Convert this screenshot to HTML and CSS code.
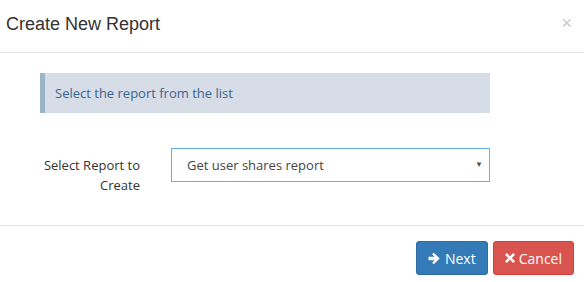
FILE: index.html
```html
<!DOCTYPE html>
<html lang="en">
<head>
    <meta charset="UTF-8">
    <title>Create New Report</title>
    <link rel="stylesheet" href="styles.css">
</head>
<body>
<div class="modal">
    <div class="modal-header">
        <h4 class="modal-title">Create New Report</h4>
        <span class="close">&times;</span>
    </div>
    <div class="modal-body">
        <div class="alert">Select the report from the list</div>
        <div class="form-row">
            <label class="form-label">Select Report to Create</label>
            <div class="select">
                <span>Get user shares report</span>
                <span class="caret">&#9660;</span>
            </div>
        </div>
    </div>
    <div class="modal-footer">
        <div class="btn btn-primary">
            <svg width="13" height="13" viewBox="0 0 12 12"><path d="M0.5 4.4h5.6L3.8 2.1 5.3 0.6 10.8 6 5.3 11.4 3.8 9.9l2.3-2.3H0.5z" fill="#fff"/></svg>
            Next
        </div>
        <div class="btn btn-danger">
            <svg width="10" height="10" viewBox="0 0 10 10"><path d="M1.8 0 5 3.2 8.2 0 10 1.8 6.8 5 10 8.2 8.2 10 5 6.8 1.8 10 0 8.2 3.2 5 0 1.8z" fill="#fff"/></svg>
            Cancel
        </div>
    </div>
</div>
</body>
</html>
```

FILE: styles.css
```css
body {
    margin: 0;
    background-color: #fff;
    font-family: "Open Sans", sans-serif;
    font-size: 13px;
    color: #333;
}
.modal {
    width: 584px;
}
.modal-header {
    height: 53px;
    border-bottom: 1px solid #e5e5e5;
    display: flex;
    align-items: center;
    justify-content: space-between;
    padding: 0 12px 0 6px;
    box-sizing: border-box;
}
.modal-title {
    margin: 0;
    font-family: "Liberation Sans", Arial, sans-serif;
    font-size: 18px;
    font-weight: normal;
    color: #333;
    padding-bottom: 3px;
}
.close {
    font-family: "Liberation Sans", Arial, sans-serif;
    font-size: 18px;
    color: #c8c8c8;
    padding-bottom: 6px;
}
.modal-body {
    padding: 20px 94px 26px 40px;
    height: 173px;
    box-sizing: border-box;
    border-bottom: 1px solid #e5e5e5;
}
.alert {
    height: 40px;
    box-sizing: border-box;
    background-color: #d6dde6;
    border-left: 5px solid #9cb4c8;
    color: #3b6592;
    padding: 0 10px;
    display: flex;
    align-items: center;
}
.form-row {
    display: flex;
    align-items: flex-start;
    margin-top: 35px;
}
.form-label {
    width: 100px;
    text-align: right;
    line-height: 20px;
    margin-top: 7px;
}
.select {
    margin-left: 31px;
    flex: 1;
    height: 34px;
    box-sizing: border-box;
    border: 1px solid #66afe9;
    display: flex;
    align-items: center;
    justify-content: space-between;
    padding: 0 6px 0 15px;
    color: #444;
}
.caret {
    font-size: 8px;
    color: #555;
    padding-bottom: 3px;
}
.modal-footer {
    display: flex;
    justify-content: flex-end;
    gap: 5px;
    padding: 15px 10px 0 0;
}
.btn {
    height: 34px;
    box-sizing: border-box;
    border-radius: 3px;
    color: #fff;
    font-size: 14px;
    display: flex;
    align-items: center;
    gap: 4px;
    padding: 0 11px;
}
.btn-primary {
    background-color: #337ab7;
    border: 1px solid #2e6da4;
}
.btn-danger {
    background-color: #d9534f;
    border: 1px solid #d43f3a;
}
```
